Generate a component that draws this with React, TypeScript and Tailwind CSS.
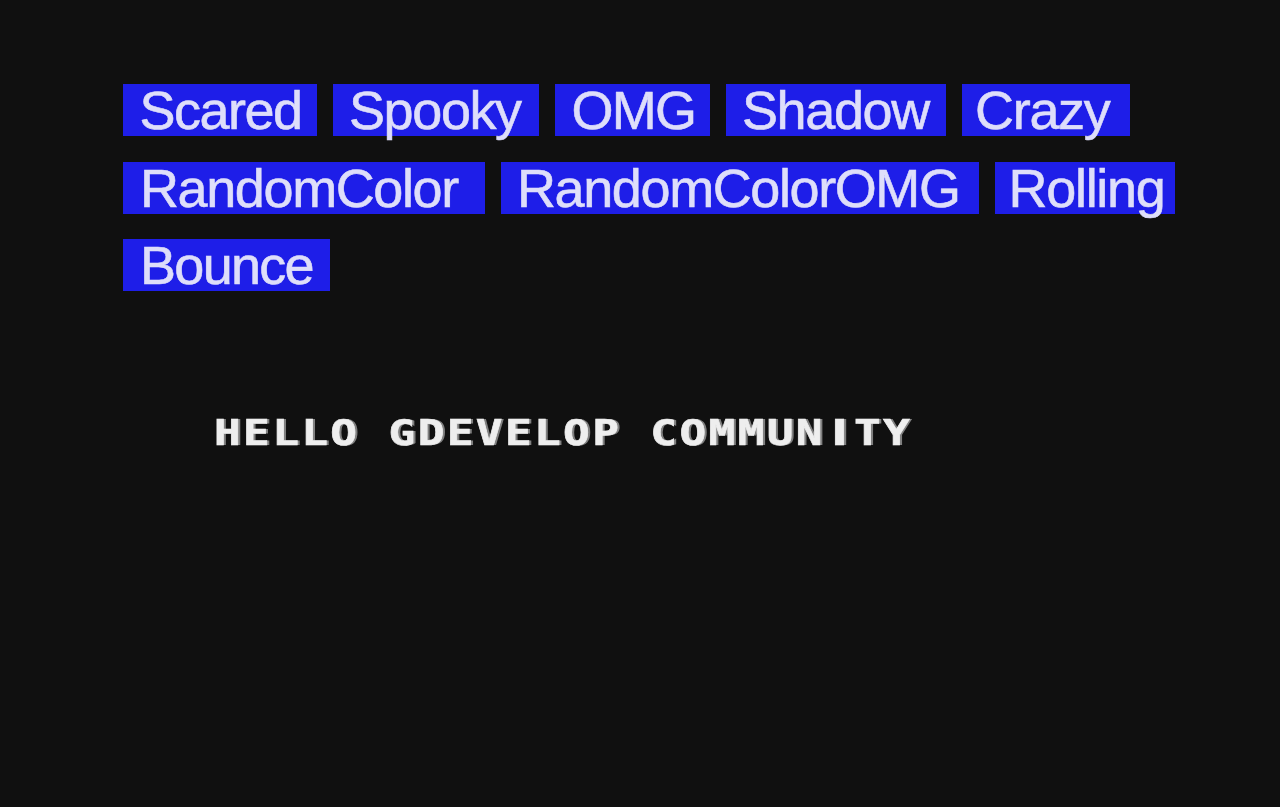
import React from 'react';
import clsx from 'clsx';

type Effect = {
  name: string;
  className: string;
};

const rows: Effect[][] = [
  [
    { name: 'Scared', className: 'w-[194px] pl-[16.5px] tracking-[-1.5px]' },
    { name: 'Spooky', className: 'w-[206px] pl-[16px] tracking-[-1.4px]' },
    { name: 'OMG', className: 'w-[155px] pl-[16.5px] tracking-[-1.8px]' },
    { name: 'Shadow', className: 'w-[220px] pl-[16px] tracking-[-1.4px]' },
    { name: 'Crazy', className: 'w-[168px] pl-[13px] tracking-[-1.3px]' },
  ],
  [
    { name: 'RandomColor', className: 'w-[362px] pl-[17px] tracking-[-1.4px]' },
    { name: 'RandomColorOMG', className: 'w-[477.5px] pl-[16px] tracking-[-1.4px]' },
    { name: 'Rolling', className: 'w-[180px] pl-[14px] tracking-[-1.3px]' },
  ],
  [{ name: 'Bounce', className: 'w-[207px] pl-[17px] tracking-[-1.7px]' }],
];

const EffectButton = ({ name, className }: Effect) => (
  <button
    className={clsx(
      'h-[52px] bg-[#1e1ee8] text-[#dedefa] text-[54px] leading-[52px] text-left whitespace-nowrap [-webkit-text-stroke:0.6px_#dedefa]',
      className
    )}
  >
    {name}
  </button>
);

const App = () => {
  return (
    <div className="h-[807px] w-[1280px] overflow-hidden bg-[#101010] pt-[84px] font-['Liberation_Sans',Arial,sans-serif]">
      {/* Effect buttons */}
      <div className="flex flex-col gap-[25.7px] pl-[123px]">
        {rows.map((row, i) => (
          <div key={i} className="flex gap-4">
            {row.map((effect) => (
              <EffectButton key={effect.name} {...effect} />
            ))}
          </div>
        ))}
      </div>

      {/* Animated message */}
      <p className="mt-[121px] ml-[214px] w-max origin-left scale-x-125 whitespace-pre font-['DejaVu_Sans_Mono',monospace] text-[35.5px] leading-[42px] font-bold tracking-[1.9px] text-[#eeeeee] will-change-transform [-webkit-text-stroke:0.6px_#eeeeee] [text-shadow:2px_0_#808080]">
        HELLO GDEVELOP COMMUN
        <span className="inline-block w-[23.27px] text-center font-['DejaVu_Sans',sans-serif] tracking-normal">I</span>
        TY
      </p>
    </div>
  );
};

export default App;
